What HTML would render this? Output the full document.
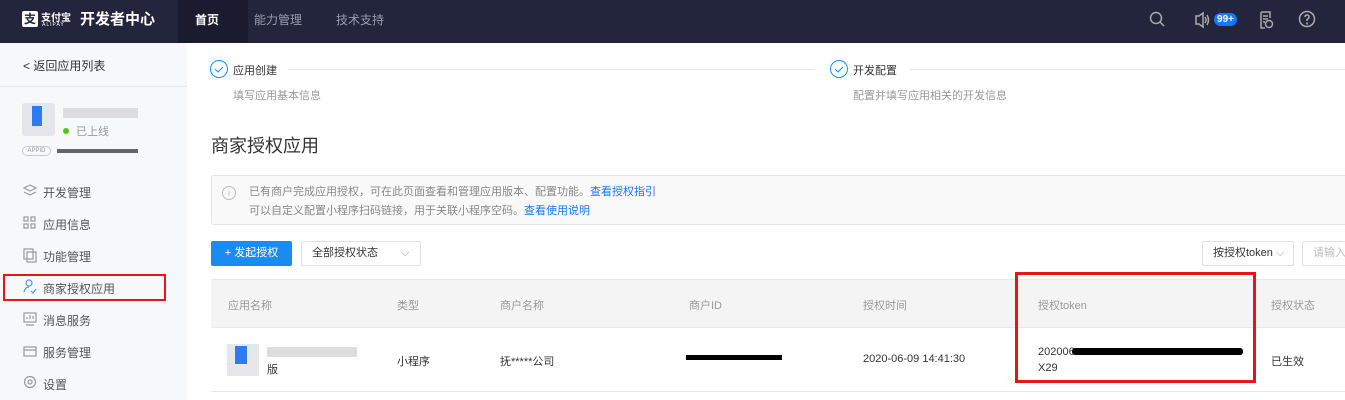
<!DOCTYPE html><html><head><meta charset="utf-8"><style>
*{margin:0;padding:0;box-sizing:border-box}
body{width:1345px;height:400px;overflow:hidden;position:relative;font-family:"Liberation Sans","Noto Sans CJK SC",sans-serif;background:#fff;color:#333}
.a{position:absolute;white-space:nowrap}
.top{left:0;top:0;width:1345px;height:43px;background:#23253d}
.side{left:0;top:43px;width:187px;height:357px;background:#f7f8fa}
.mi{font-size:12px;color:#555;left:43px}
.g{color:#999;font-size:11px}
.th{font-size:11px;color:#999;top:297px}
.td{font-size:11px;color:#333}
</style></head><body>
<div class="a top"></div>
<div class="a" style="left:22px;top:11px;width:16px;height:16px;background:#fff;border-radius:2px;color:#23253d;font-size:12px;font-weight:bold;line-height:16px;text-align:center">支</div>
<div class="a" style="left:41px;top:9px;color:#fff;font-size:10px;font-weight:bold">支付宝</div>
<div class="a" style="left:42px;top:22px;color:#fff;font-size:5px;letter-spacing:1px">ALIPAY</div>
<div class="a" style="left:80px;top:8px;color:#fff;font-size:15px;font-weight:bold">开发者中心</div>
<div class="a" style="left:178px;top:0;width:70px;height:43px;background:#1a1b2e"></div>
<div class="a" style="left:195px;top:11px;color:#fff;font-size:12px;font-weight:bold">首页</div>
<div class="a" style="left:254px;top:11px;color:#9a9cad;font-size:12px">能力管理</div>
<div class="a" style="left:336px;top:11px;color:#9a9cad;font-size:12px">技术支持</div>
<svg class="a" style="left:1148px;top:10px" width="200" height="22" fill="none" stroke="#aaa" stroke-width="1.5">
<circle cx="8" cy="8" r="5.5"/><path d="M12 12l4 4"/>
<path d="M48 6h3l4-3v14l-4-3h-3z M57 7q2 3 0 6 M59 5q3 5 0 10"/>
<path d="M113 2h9v6 M117 18h-4V2 M115 6h5 M115 9h5 M115 12h2"/><circle cx="121" cy="14" r="3.5"/>
<circle cx="159" cy="9" r="7.5"/><path d="M157 7q0-2 2-2t2 2q0 1.5-2 2.5v1.5"/><circle cx="159" cy="13.5" r=".4"/>
</svg>
<div class="a" style="left:1214px;top:13px;width:23px;height:13px;background:#1677ff;border-radius:7px;color:#fff;font-size:10px;font-weight:bold;text-align:center;line-height:13px">99+</div>
<div class="a side"></div>
<div class="a" style="left:0;top:86px;width:187px;height:1px;background:#e8e8e8"></div>
<div class="a" style="left:23px;top:57px;font-size:12px;color:#333">&lt; 返回应用列表</div>
<div class="a" style="left:22px;top:103px;width:33px;height:33px;background:#e4e6ea;border-radius:3px"><div style="margin:3px 0 0 10px;width:10px;height:20px;background:#2d7bf0"></div></div>
<div class="a" style="left:63px;top:108px;width:75px;height:10px;background:#ddd"></div>
<div class="a" style="left:63px;top:128px;width:6px;height:6px;border-radius:50%;background:#52c41a"></div>
<div class="a" style="left:76px;top:123px;font-size:11px;color:#999">已上线</div>
<div class="a" style="left:22px;top:146px;width:29px;height:10px;border:1px solid #ccc;border-radius:5px;font-size:6px;color:#999;text-align:center;line-height:8px">APPID</div>
<div class="a" style="left:57px;top:149px;width:81px;height:4px;background:#666"></div>
<div class="a mi" style="top:184px">开发管理</div>
<div class="a mi" style="top:216px">应用信息</div>
<div class="a mi" style="top:248px">功能管理</div>
<div class="a mi" style="top:280px">商家授权应用</div>
<div class="a mi" style="top:312px">消息服务</div>
<div class="a mi" style="top:344px">服务管理</div>
<div class="a mi" style="top:376px">设置</div>
<svg class="a" style="left:22px;top:183px" width="16" height="210" fill="none" stroke="#999" stroke-width="1.2">
<path d="M2 5l6-3 6 3-6 3z M2 9l6 3 6-3"/>
<rect x="2" y="34" width="4" height="4"/><rect x="9" y="34" width="4" height="4"/><rect x="2" y="41" width="4" height="4"/><rect x="9" y="41" width="4" height="4"/>
<rect x="2" y="66" width="9" height="10"/><rect x="5" y="69" width="9" height="10"/>
<circle cx="7" cy="100" r="3" stroke="#5b8ff9"/><path d="M2 109q1-5 5-5 M9 108l2 2 3-4" stroke="#5b8ff9"/>
<rect x="2" y="130" width="12" height="9"/><path d="M5 136v-2 M8 136v-4 M11 136v-3 M4 142h8"/>
<rect x="2" y="164" width="12" height="9"/><path d="M2 167h12"/>
<circle cx="8" cy="199" r="5.5"/><circle cx="8" cy="199" r="2"/>
</svg>
<div class="a" style="left:3px;top:274px;width:163px;height:27px;border:2px solid #e8141a"></div>
<svg class="a" style="left:209px;top:59px" width="1136" height="20" fill="none">
<circle cx="10" cy="10" r="8.5" stroke="#1890ff"/><path d="M6 10l3 3 5-5" stroke="#1890ff"/>
<path d="M79 10.5h527" stroke="#e5e5e5"/>
<circle cx="630" cy="10" r="8.5" stroke="#1890ff"/><path d="M626 10l3 3 5-5" stroke="#1890ff"/>
<path d="M701 10.5h435" stroke="#e5e5e5"/>
</svg>
<div class="a" style="left:233px;top:62px;font-size:11px">应用创建</div>
<div class="a" style="left:853px;top:62px;font-size:11px">开发配置</div>
<div class="a g" style="left:233px;top:87px">填写应用基本信息</div>
<div class="a g" style="left:853px;top:87px">配置并填写应用相关的开发信息</div>
<div class="a" style="left:211px;top:132px;font-size:18px;color:#333">商家授权应用</div>
<div class="a" style="left:211px;top:175px;width:1140px;height:50px;background:#f9f9f9;border:1px solid #e5e5e5;border-radius:3px"></div>
<div class="a" style="left:222px;top:186px;width:14px;height:14px;border:1px solid #bbb;border-radius:50%;font-size:9px;color:#bbb;text-align:center;line-height:12px">i</div>
<div class="a g" style="left:249px;top:183px;color:#888">已有商户完成应用授权，可在此页面查看和管理应用版本、配置功能。<span style="color:#1677ff">查看授权指引</span></div>
<div class="a g" style="left:249px;top:202px;color:#888">可以自定义配置小程序扫码链接，用于关联小程序空码。<span style="color:#1677ff">查看使用说明</span></div>
<div class="a" style="left:211px;top:241px;width:81px;height:25px;background:#1a8cf0;border-radius:2px;color:#fff;font-size:11px;text-align:center;line-height:25px">+ 发起授权</div>
<div class="a" style="left:301px;top:241px;width:120px;height:25px;border:1px solid #e0e0e0;border-radius:2px;font-size:11px;line-height:23px;padding-left:10px">全部授权状态<span style="position:absolute;left:99px;color:#999">⌵</span></div>
<div class="a" style="left:1202px;top:241px;width:92px;height:25px;border:1px solid #e0e0e0;border-radius:2px;font-size:11px;line-height:23px;padding-left:10px">按授权token <span style="color:#999">⌵</span></div>
<div class="a" style="left:1302px;top:241px;width:60px;height:25px;border:1px solid #e0e0e0;border-radius:2px;font-size:11px;color:#bbb;line-height:23px;padding-left:10px">请输入名</div>
<div class="a" style="left:211px;top:279px;width:1134px;height:49px;background:#f4f4f4;border-top:1px solid #e8e8e8;border-bottom:1px solid #e8e8e8"></div>
<div class="a th" style="left:228px">应用名称</div><div class="a th" style="left:397px">类型</div><div class="a th" style="left:500px">商户名称</div><div class="a th" style="left:689px">商户ID</div><div class="a th" style="left:863px">授权时间</div><div class="a th" style="left:1038px">授权token</div><div class="a th" style="left:1271px">授权状态</div>
<div class="a" style="left:211px;top:391px;width:1134px;height:1px;background:#e8e8e8"></div>
<div class="a" style="left:227px;top:344px;width:32px;height:32px;background:#e6e7ea"><div style="margin:2px 0 0 8px;width:12px;height:18px;background:#2d7bf0"></div></div>
<div class="a" style="left:267px;top:347px;width:90px;height:10px;background:#ddd"></div>
<div class="a td" style="left:267px;top:361px">版</div>
<div class="a td" style="left:397px;top:353px">小程序</div>
<div class="a td" style="left:500px;top:353px">抚*****公司</div>
<div class="a" style="left:686px;top:355px;width:96px;height:5px;background:#000"></div>
<div class="a td" style="left:863px;top:353px">2020-06-09 14:41:30</div>
<div class="a td" style="left:1038px;top:346px">202006</div>
<div class="a" style="left:1072px;top:348px;width:171px;height:7px;background:#000;border-radius:3px"></div>
<div class="a td" style="left:1038px;top:362px">X29</div>
<div class="a td" style="left:1271px;top:353px">已生效</div>
<div class="a" style="left:1015px;top:272px;width:241px;height:111px;border:3px solid #e8141a"></div>
</body></html>
